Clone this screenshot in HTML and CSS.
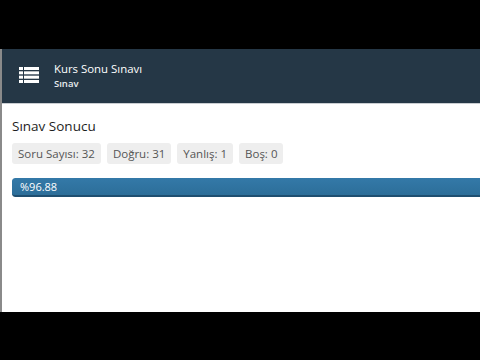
FILE: index.html
```html
<!DOCTYPE html>
<html lang="tr">
<head>
<meta charset="utf-8">
<title>Kurs Sonu Sınavı</title>
<link rel="stylesheet" href="styles.css">
</head>
<body>
<div class="letterbox"></div>
<div class="frame">
  <header class="topbar">
    <svg class="menu-icon" viewBox="0 0 20 16" width="20" height="16" aria-hidden="true">
      <g fill="#ffffff">
        <rect x="0" y="0" width="4" height="3"/><rect x="5" y="0" width="15" height="3"/>
        <rect x="0" y="4.33" width="4" height="3"/><rect x="5" y="4.33" width="15" height="3"/>
        <rect x="0" y="8.67" width="4" height="3"/><rect x="5" y="8.67" width="15" height="3"/>
        <rect x="0" y="13" width="4" height="3"/><rect x="5" y="13" width="15" height="3"/>
      </g>
    </svg>
    <div class="titles">
      <div class="title">Kurs Sonu Sınavı</div>
      <div class="subtitle">Sınav</div>
    </div>
  </header>
  <main class="content">
    <h1 class="heading">Sınav Sonucu</h1>
    <div class="badges">
      <span class="badge">Soru Sayısı: 32</span>
      <span class="badge">Doğru: 31</span>
      <span class="badge">Yanlış: 1</span>
      <span class="badge">Boş: 0</span>
    </div>
    <div class="progress">
      <div class="progress-bar" style="width: 96.88%">%96.88</div>
    </div>
  </main>
</div>
<div class="letterbox bottom"></div>
</body>
</html>
```

FILE: styles.css
```css
html, body {
  margin: 0;
  padding: 0;
  background: #000;
  overflow: hidden;
  width: 480px;
  height: 360px;
}

body {
  font-family: "Open Sans", "Noto Sans", sans-serif;
  display: flex;
  flex-direction: column;
}

.letterbox {
  height: 49px;
  background: #000;
  flex: none;
}

.letterbox.bottom {
  height: 48px;
}

.frame {
  height: 263px;
  flex: none;
  background: #fff;
  border-left: 2px solid #8a8a8a;
  display: flex;
  flex-direction: column;
  overflow: hidden;
}

.topbar {
  height: 54px;
  background: #253746;
  border-bottom: 1px solid #c9cdd1;
  display: flex;
  align-items: center;
  padding-left: 17px;
  gap: 15px;
  flex: none;
}

.menu-icon {
  display: block;
  flex: none;
  margin-top: -2px;
}

.titles {
  display: flex;
  flex-direction: column;
  color: #fff;
  margin-top: -1px;
}

.title {
  font-size: 11.4px;
  line-height: 16px;
}

.subtitle {
  font-size: 9.5px;
  line-height: 13px;
  font-weight: 600;
  color: #e8ecef;
}

.content {
  padding: 13px 0 0 10px;
  display: flex;
  flex-direction: column;
}

.heading {
  margin: 0;
  font-size: 13.5px;
  font-weight: 400;
  line-height: 18px;
  color: #1e1e1e;
}

.badges {
  display: flex;
  gap: 6px;
  margin-top: 8px;
}

.badge {
  background: #eeeeee;
  color: #555;
  font-size: 11.5px;
  line-height: 21px;
  height: 21px;
  padding: 0 6px;
  border-radius: 3px;
}

.progress {
  margin-top: 14px;
  width: 520px;
  height: 19px;
  background: #f5f5f5;
  border-radius: 3px;
  overflow: hidden;
}

.progress-bar {
  height: 100%;
  box-sizing: border-box;
  background: linear-gradient(#3479a8, #2c6e99);
  border-bottom: 2px solid #1e4e70;
  color: #fff;
  font-size: 11px;
  line-height: 18px;
  padding-left: 8px;
  border-radius: 3px 0 0 3px;
}
```
